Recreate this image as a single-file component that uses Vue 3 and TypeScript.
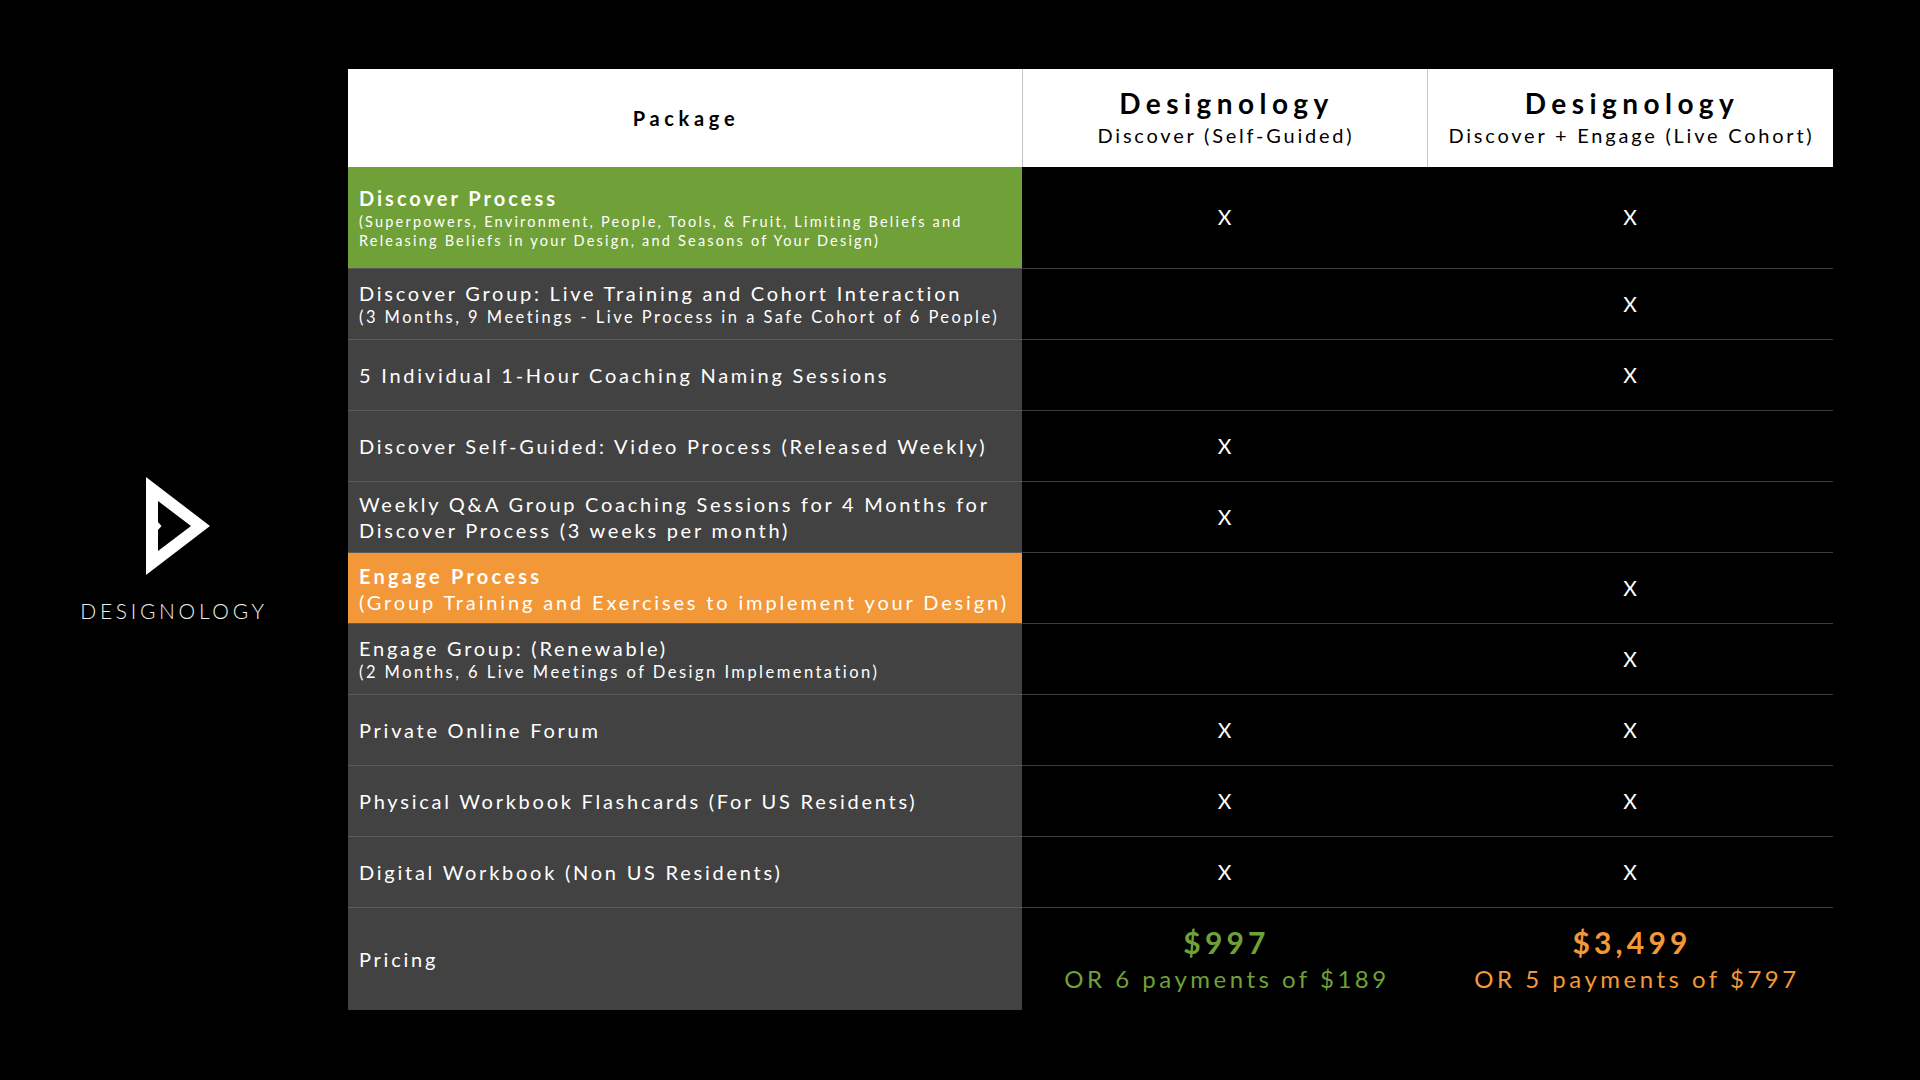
<template>
  <div class="page">
    <aside class="brand">
      <svg class="mark" viewBox="0 0 64 98" width="64" height="98">
        <path fill="#fff" fill-rule="evenodd" d="M0 0 L64 49 L0 98 Z M12 24 V45 L15.5 49 L12 53 V74 L45 49 Z" />
      </svg>
      <div class="brand-name">DESIGNOLOGY</div>
    </aside>

    <div class="table">
      <div class="head package">Package</div>
      <div class="head" v-for="p in plans" :key="p.sub">
        <div class="plan">Designology</div>
        <div class="plan-sub">{{ p.sub }}</div>
      </div>

      <template v-for="r in rows" :key="r.title">
        <div class="label" :class="r.kind">
          <div class="title">{{ r.title }}</div>
          <div v-for="s in r.subs" :key="s" class="sub">{{ s }}</div>
        </div>
        <div class="mark-cell">{{ r.a ? 'X' : '' }}</div>
        <div class="mark-cell">{{ r.b ? 'X' : '' }}</div>
      </template>

      <div class="label pricing">
        <div class="title">Pricing</div>
      </div>
      <div class="mark-cell pricing green">
        <div class="price">$997</div>
        <div class="terms first">OR 6 payments of $189</div>
      </div>
      <div class="mark-cell pricing orange">
        <div class="price">$3,499</div>
        <div class="terms second">OR 5 payments of $797</div>
      </div>
    </div>
  </div>
</template>

<script setup lang="ts">
interface Row {
  title: string
  subs?: string[]
  kind?: string
  a?: boolean
  b?: boolean
}

const plans = [{ sub: 'Discover (Self-Guided)' }, { sub: 'Discover + Engage (Live Cohort)' }]

const rows: Row[] = [
  {
    title: 'Discover Process',
    subs: ['(Superpowers, Environment, People, Tools, & Fruit, Limiting Beliefs and', 'Releasing Beliefs in your Design, and Seasons of Your Design)'],
    kind: 'discover',
    a: true,
    b: true,
  },
  { title: 'Discover Group: Live Training and Cohort Interaction', subs: ['(3 Months, 9 Meetings - Live Process in a Safe Cohort of 6 People)'], kind: 'small', b: true },
  { title: '5 Individual 1-Hour Coaching Naming Sessions', b: true },
  { title: 'Discover Self-Guided: Video Process (Released Weekly)', a: true },
  { title: 'Weekly Q&A Group Coaching Sessions for 4 Months for Discover Process (3 weeks per month)', kind: 'wrap', a: true },
  { title: 'Engage Process', subs: ['(Group Training and Exercises to implement your Design)'], kind: 'engage', b: true },
  { title: 'Engage Group: (Renewable)', subs: ['(2 Months, 6 Live Meetings of Design Implementation)'], kind: 'small', b: true },
  { title: 'Private Online Forum', a: true, b: true },
  { title: 'Physical Workbook Flashcards (For US Residents)', a: true, b: true },
  { title: 'Digital Workbook (Non US Residents)', a: true, b: true },
]
</script>

<style>
html,
body {
  margin: 0;
  background: #000;
}
</style>

<style scoped>
.page {
  display: flex;
  width: 1920px;
  height: 1080px;
  padding-top: 69px;
  box-sizing: border-box;
  background: #000;
  color: #fff;
  font-family: Lato, "Open Sans", sans-serif;
}

.brand {
  width: 348px;
  height: 942px;
  flex: none;
  display: flex;
  flex-direction: column;
  align-items: center;
  justify-content: center;
  padding: 20px 0 0 0;
  box-sizing: border-box;
}

.mark {
  margin-left: 7px;
}

.brand-name {
  margin-top: 23px;
  font-size: 21px;
  font-weight: 300;
  letter-spacing: 3.7px;
  color: #f0f0f0;
}

.table {
  display: grid;
  grid-template-columns: 674px 405px 406px;
  grid-template-rows: 98px 102px repeat(9, 71px) 102px;
  width: 1485px;
  height: 941px;
}

.head {
  display: flex;
  flex-direction: column;
  align-items: center;
  justify-content: center;
  background: #fff;
  color: #000;
  border-left: 1px solid #c4c4c4;
  font-size: 20px;
  font-weight: 700;
  letter-spacing: 4.7px;
}

.head:first-child {
  border-left: 0;
}

.head.package {
  padding-left: 2px;
}

.plan {
  margin-bottom: 2px;
  padding-left: 3px;
  font-size: 28px;
  font-weight: 700;
  line-height: 34px;
  letter-spacing: 5.45px;
}

.plan-sub {
  padding: 0 0 2px 2px;
  font-size: 20px;
  font-weight: 400;
  line-height: 26px;
  letter-spacing: 2.78px;
}

.label {
  display: flex;
  flex-direction: column;
  justify-content: center;
  padding-left: 11px;
  background: #424242;
  border-bottom: 1px solid #5a5a5a;
  box-sizing: border-box;
  font-size: 20px;
  letter-spacing: 2.75px;
  line-height: 26px;
  white-space: nowrap;
}

.label.wrap {
  white-space: normal;
  padding-right: 30px;
}

.label.small .sub {
  font-size: 16.5px;
  line-height: 22px;
  letter-spacing: 2.47px;
}

.label.discover {
  background: #70a038;
}

.label.discover .title {
  margin-bottom: 2px;
  font-weight: 700;
  letter-spacing: 3px;
}

.label.engage .title {
  font-weight: 700;
  letter-spacing: 3.25px;
}

.label.engage .sub {
  letter-spacing: 2.85px;
}

.label.discover .sub {
  font-size: 14.5px;
  line-height: 18.5px;
  letter-spacing: 2.2px;
}

.label.engage {
  background: #f29838;
  padding-top: 2px;
}

.mark-cell {
  display: flex;
  flex-direction: column;
  align-items: center;
  justify-content: center;
  padding-bottom: 2px;
  border-bottom: 1px solid #3c3c3c;
  box-sizing: border-box;
  font-size: 21px;
}

.pricing {
  border-bottom: 0;
}

.mark-cell.pricing {
  padding: 2px 0 0;
}

.price {
  padding-left: 4px;
  font-size: 30px;
  font-weight: 700;
  line-height: 38px;
  letter-spacing: 4.2px;
}

.terms {
  font-size: 24px;
  font-weight: 400;
  line-height: 36px;
  letter-spacing: 3.5px;
}

.terms.first {
  padding-left: 5px;
}

.terms.second {
  padding-left: 14px;
}

.green {
  color: #70a038;
}

.orange {
  color: #f29838;
}
</style>
